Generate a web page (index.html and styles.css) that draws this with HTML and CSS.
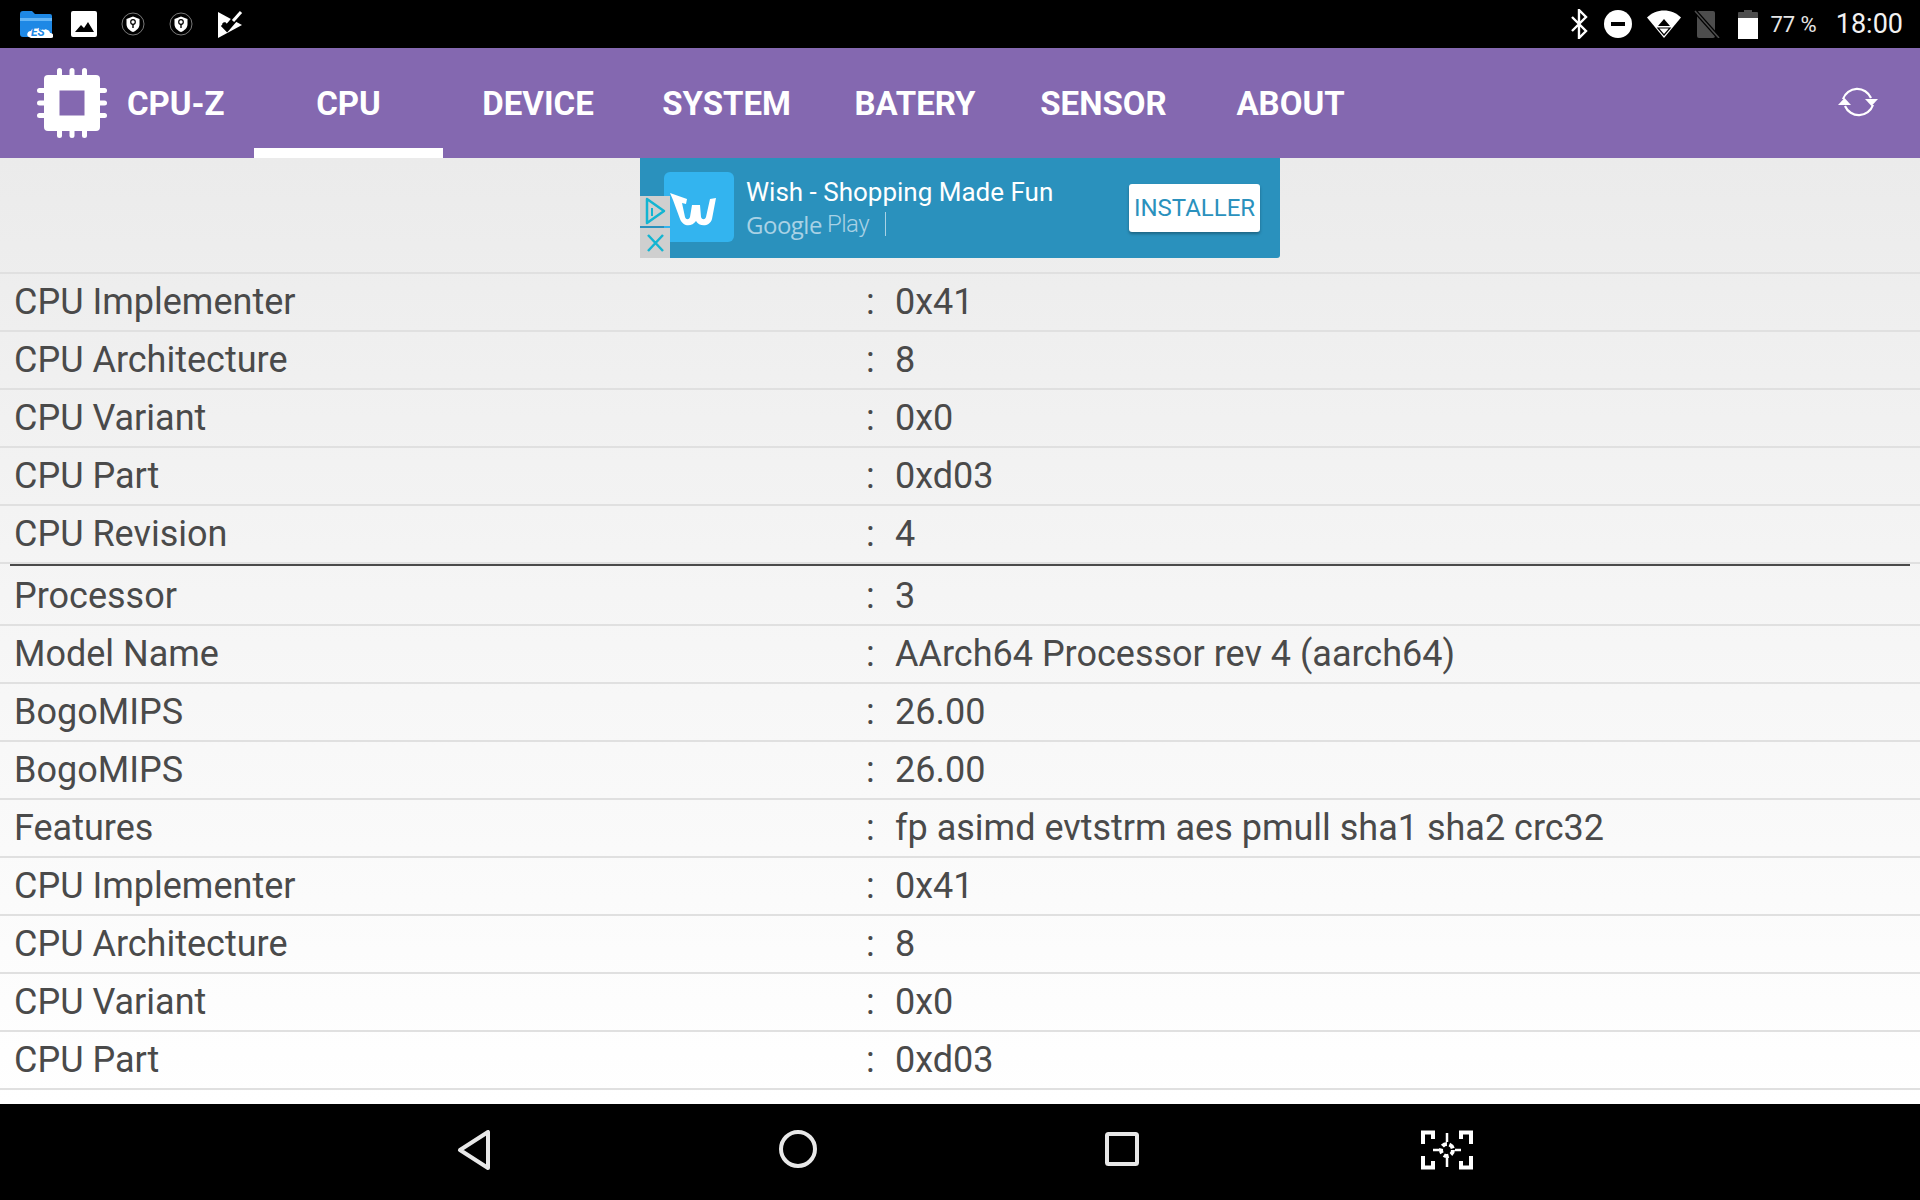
FILE: index.html
```html
<!DOCTYPE html>
<html lang="en">
<head>
<meta charset="utf-8">
<title>CPU-Z</title>
<link rel="stylesheet" href="styles.css">
</head>
<body>
<div class="screen">
  <header class="status">
    <div class="status-left">
      <svg class="ic-es" viewBox="0 0 34 30"><path d="M1 5a3 3 0 0 1 3-3h9l3 3h15a2 2 0 0 1 2 2v18a3 3 0 0 1-3 3H4a3 3 0 0 1-3-3z" fill="#1e88e5"/><path d="M1 9h32v3H1z" fill="#64b5f6"/><path d="M6 28c-3-1-2-6 2-6 1-4 8-5 10-1 4-2 9 0 9 3 4 0 5 5 1 5H8z" fill="#fff" transform="translate(4 0)"/><text x="12" y="27" class="es-text">ES</text></svg>
      <svg class="ic-pic" viewBox="0 0 26 26"><rect width="26" height="26" rx="2" fill="#fff"/><path d="M4 21l6-7 3 3 4-6 6 10z" fill="#000"/></svg>
      <svg class="ic-vpn" viewBox="0 0 24 24"><circle cx="12" cy="12" r="11" fill="none" stroke="#aaa" stroke-width=".7"/><path d="M12 4.5l6.5 2.5v5c0 4-3 6.500-6.500 8-3.500-1.500-6.500-4-6.500-8V7z" fill="#fff"/><circle cx="12" cy="10" r="2.300" fill="none" stroke="#000" stroke-width="1.200"/><path d="M12 12v4" stroke="#000" stroke-width="1.400"/></svg>
      <svg class="ic-vpn" viewBox="0 0 24 24"><circle cx="12" cy="12" r="11" fill="none" stroke="#aaa" stroke-width=".7"/><path d="M12 4.5l6.5 2.5v5c0 4-3 6.500-6.500 8-3.500-1.500-6.500-4-6.500-8V7z" fill="#fff"/><circle cx="12" cy="10" r="2.300" fill="none" stroke="#000" stroke-width="1.200"/><path d="M12 12v4" stroke="#000" stroke-width="1.400"/></svg>
      <svg class="ic-task" viewBox="0 0 26 27"><path d="M1 1l24 13L1 27z" fill="#fff"/><path d="M6 13l4 4 13-15" fill="none" stroke="#000" stroke-width="6"/><path d="M6 13l4 4 11-14" fill="none" stroke="#fff" stroke-width="0"/><path d="M6 12l4 4 8-9" fill="none" stroke="#000" stroke-width="3"/><path d="M16 10l8-9" stroke="#fff" stroke-width="3"/></svg>
    </div>
    <div class="status-right">
      <svg class="ic-bt" viewBox="0 0 18 30"><path d="M2 8l14 14-7 7V1l7 7L2 22" fill="none" stroke="#fff" stroke-width="2.400"/></svg>
      <svg class="ic-dnd" viewBox="0 0 28 28"><circle cx="14" cy="14" r="14" fill="#fff"/><rect x="7" y="12" width="14" height="4" fill="#000"/></svg>
      <svg class="ic-wifi" viewBox="0 0 34 28"><path d="M0 7.500C9-2 25-2 34 7.500L17 28z" fill="#fff"/><path d="M17 9l6 7H11z" fill="#000"/><path d="M17 25l6-7H11z" fill="none" stroke="#000" stroke-width="1.200"/></svg>
      <svg class="ic-sim" viewBox="0 0 26 28"><path d="M5 1h14a2 2 0 0 1 2 2v23a2 2 0 0 1-2 2H5a2 2 0 0 1-2-2V3a2 2 0 0 1 2-2z" fill="#4d4d4d"/><path d="M1 1l24 27" stroke="#000" stroke-width="4"/><path d="M1 1l24 27" stroke="#4d4d4d" stroke-width="1.500"/></svg>
      <svg class="ic-bat" viewBox="0 0 20 30"><path d="M6 3V1h8v2h5a1 1 0 0 1 1 1v6H0V4a1 1 0 0 1 1-1z" fill="#4d4d4d"/><rect y="9" width="20" height="21" fill="#fff"/></svg>
      <span class="pct">77 %</span>
      <span class="clock">18:00</span>
    </div>
  </header>

  <nav class="appbar">
    <div class="brand">
      <svg class="chip" viewBox="0 0 70 70"><g fill="#fff"><rect x="7" y="7" width="56" height="56" rx="4"/><rect x="20" y="0" width="5" height="70" rx="2.500"/><rect x="32.500" y="0" width="5" height="70" rx="2.500"/><rect x="45" y="0" width="5" height="70" rx="2.500"/><rect y="20" width="70" height="5" rx="2.500"/><rect y="32.500" width="70" height="5" rx="2.500"/><rect y="45" width="70" height="5" rx="2.500"/></g><rect x="22.500" y="22.500" width="25" height="25" fill="#8468b0"/></svg>
      <span class="brand-name">CPU-Z</span>
    </div>
    <div class="tabs">
      <a class="tab tab-cpu active">CPU</a>
      <a class="tab tab-device">DEVICE</a>
      <a class="tab tab-system">SYSTEM</a>
      <a class="tab tab-batery">BATERY</a>
      <a class="tab tab-sensor">SENSOR</a>
      <a class="tab tab-about">ABOUT</a>
    </div>
    <svg class="refresh" viewBox="0 0 42 36"><g fill="none" stroke="#fff" stroke-width="2.200"><path d="M6 15A15 15 0 0 1 34 14"/><path d="M36 21A15 15 0 0 1 8 22"/></g><path d="M28 15h13l-6.500 7z" fill="#fff"/><path d="M1 21h13l-6.500-7z" fill="#fff"/></svg>
  </nav>

  <main class="content">
    <div class="ad-wrap">
      <div class="ad">
        <div class="ad-logo"><svg viewBox="0 0 54 42"><path d="M5 7l17 6-1 5-4-1 3 14c1 3 4 3 5 0l2-12 8 0 1 12c1 3 4 3 5 0l4-18 6-1-4 21c-2 8-13 8-16 2-4 6-13 6-16-2L8 14z" fill="#fff"/></svg></div>
        <div class="ad-text">
          <div class="ad-title">Wish - Shopping Made Fun</div>
          <div class="ad-sub"><span class="ad-google">Google</span> <span class="ad-play">Play</span><span class="ad-bar"></span></div>
        </div>
        <div class="ad-btn">INSTALLER</div>
        <div class="ad-choices">
          <div class="ad-choice"><svg viewBox="0 0 24 30"><path d="M4 3l17 12L4 27z" fill="none" stroke="#13b5d2" stroke-width="2.500" stroke-linejoin="round"/><path d="M9 12v8" stroke="#13b5d2" stroke-width="2"/></svg></div>
          <div class="ad-choice"><svg viewBox="0 0 24 30"><path d="M5 7l15 16M20 7L5 23" stroke="#13b5d2" stroke-width="2.500"/></svg></div>
        </div>
      </div>
    </div>
    <section class="table">
      <div class="row"><span class="k">CPU Implementer</span><span class="c">:</span><span class="v">0x41</span></div>
      <div class="row"><span class="k">CPU Architecture</span><span class="c">:</span><span class="v">8</span></div>
      <div class="row"><span class="k">CPU Variant</span><span class="c">:</span><span class="v">0x0</span></div>
      <div class="row"><span class="k">CPU Part</span><span class="c">:</span><span class="v">0xd03</span></div>
      <div class="row"><span class="k">CPU Revision</span><span class="c">:</span><span class="v">4</span></div>
    </section>
    <hr class="divider">
    <section class="table table-second">
      <div class="row"><span class="k">Processor</span><span class="c">:</span><span class="v">3</span></div>
      <div class="row"><span class="k">Model Name</span><span class="c">:</span><span class="v">AArch64 Processor rev 4 (aarch64)</span></div>
      <div class="row"><span class="k">BogoMIPS</span><span class="c">:</span><span class="v">26.00</span></div>
      <div class="row"><span class="k">BogoMIPS</span><span class="c">:</span><span class="v">26.00</span></div>
      <div class="row"><span class="k">Features</span><span class="c">:</span><span class="v">fp asimd evtstrm aes pmull sha1 sha2 crc32</span></div>
      <div class="row"><span class="k">CPU Implementer</span><span class="c">:</span><span class="v">0x41</span></div>
      <div class="row"><span class="k">CPU Architecture</span><span class="c">:</span><span class="v">8</span></div>
      <div class="row"><span class="k">CPU Variant</span><span class="c">:</span><span class="v">0x0</span></div>
      <div class="row"><span class="k">CPU Part</span><span class="c">:</span><span class="v">0xd03</span></div>
    </section>
  </main>

  <footer class="navbar">
    <svg class="nav-back" viewBox="0 0 34 40"><path d="M31 2v36L3 20z" fill="none" stroke="#e8e8e8" stroke-width="4" stroke-linejoin="round"/></svg>
    <svg class="nav-home" viewBox="0 0 38 38"><circle cx="19" cy="19" r="17" fill="none" stroke="#e8e8e8" stroke-width="4"/></svg>
    <svg class="nav-recent" viewBox="0 0 34 34"><rect x="2" y="2" width="30" height="30" rx="1.500" fill="none" stroke="#e8e8e8" stroke-width="4"/></svg>
    <svg class="nav-shot" viewBox="0 0 56 40"><g fill="none" stroke="#fff" stroke-width="4"><path d="M14 9V2.500H4V14"/><path d="M42 9V2.500h10V14"/><path d="M14 31v6.500H4V26"/><path d="M42 31v6.500h10V26"/></g><circle cx="28" cy="20" r="6" fill="none" stroke="#fff" stroke-width="4" stroke-dasharray="5 2.500"/><path d="M28 3v9M28 28v9M14 20h6M36 20h6" stroke="#fff" stroke-width="2.500"/></svg>
  </footer>
</div>
</body>
</html>
```

FILE: styles.css
```css
* { box-sizing: border-box; }
html, body { margin: 0; padding: 0; }
body { width: 1920px; height: 1200px; overflow: hidden; font-family: Roboto, "Liberation Sans", sans-serif; }
.screen { width: 1920px; height: 1200px; display: flex; flex-direction: column; background: #fff; }

.status { height: 48px; flex: none; background: #000; display: flex; justify-content: space-between; align-items: center; padding: 0 17px 0 19px; }
.status-left, .status-right { display: flex; align-items: center; }
.status svg { display: block; flex: none; }
.ic-es { width: 34px; height: 30px; }
.es-text { font: italic 700 12px Roboto, sans-serif; fill: #1e88e5; }
.ic-pic { width: 26px; height: 26px; margin-left: 18px; }
.ic-vpn { width: 24px; height: 24px; margin-left: 24px; }
.ic-vpn + .ic-vpn { margin-left: 24px; }
.ic-task { width: 26px; height: 27px; margin-left: 24px; }
.ic-bt { width: 18px; height: 30px; }
.ic-dnd { width: 28px; height: 28px; margin-left: 16px; }
.ic-wifi { width: 34px; height: 28px; margin-left: 15px; }
.ic-sim { width: 26px; height: 28px; margin-left: 13px; }
.ic-bat { width: 20px; height: 30px; margin-left: 18px; }
.pct { color: #e6e6e6; font-size: 22px; margin-left: 12px; }
.clock { color: #f2f2f2; font-size: 27px; margin-left: 19px; }

.appbar { height: 110px; flex: none; background: #8468b0; display: flex; align-items: stretch; position: relative; }
.brand { display: flex; align-items: center; width: 254px; padding-left: 37px; }
.chip { width: 70px; height: 70px; flex: none; }
.brand-name { color: #fff; font-weight: 700; font-size: 33px; margin-left: 20px; }
.tabs { display: flex; }
.tab { color: #fff; font-weight: 700; font-size: 33px; display: flex; align-items: center; justify-content: center; height: 110px; }
.tab.active { border-bottom: 10px solid #fff; padding-top: 10px; }
.tab-cpu { width: 189px; }
.tab-device { width: 190px; }
.tab-system { width: 187px; }
.tab-batery { width: 190px; }
.tab-sensor { width: 187px; }
.tab-about { width: 187px; }
.refresh { position: absolute; right: 41px; top: 36px; width: 42px; height: 36px; }

.content { flex: 1; min-height: 0; overflow: hidden; background: linear-gradient(#ebebeb, #f5f5f5 46%, #ffffff); }
.ad-wrap { height: 116px; border-bottom: 2px solid #e0e0e0; display: flex; justify-content: center; padding-right: 0; }
.ad { width: 640px; height: 100px; background: #2a91bd; border-radius: 0 0 3px 3px; display: flex; align-items: flex-start; position: relative; }
.ad-logo { width: 70px; height: 70px; background: #33b4ef; border-radius: 6px; margin: 14px 0 0 24px; display: flex; align-items: center; justify-content: center; }
.ad-logo svg { width: 54px; height: 42px; margin-left: -14px; }
.ad-text { margin: 19px 0 0 12px; flex: 1; }
.ad-title { color: #fff; font-size: 26px; line-height: 30px; }
.ad-sub { display: flex; align-items: center; height: 30px; margin-top: 2px; color: #a9d2e5; font-size: 24px; letter-spacing: -.5px; }
.ad-google { font-family: "Open Sans", sans-serif; }
.ad-play { font-weight: 300; margin-left: 5px; }
.ad-bar { width: 1px; height: 24px; background: #a9d2e5; margin-left: 16px; }
.ad-btn { width: 131px; height: 48px; margin: 26px 20px 0 0; background: #fff; border-radius: 3px; color: #2a91bd; font-size: 24px; display: flex; align-items: center; justify-content: center; box-shadow: 0 2px 3px rgba(0,0,0,.3); }
.ad-choices { position: absolute; left: 0; bottom: 0; }
.ad-choice { width: 30px; height: 30px; background: #cfcfcf; margin-top: 2px; }
.ad-choice svg { display: block; width: 100%; height: 100%; }

.row { height: 58px; display: flex; align-items: center; border-bottom: 2px solid #e0e0e0; padding-left: 14px; color: #4a4a4a; font-size: 36px; }
.k { width: 852px; flex: none; }
.c { width: 29px; flex: none; }
.table > .row:last-child { }
.divider { height: 2px; margin: 0 10px; border: 0; background: #4a4a4a; }
.table-second { margin-top: 2px; }

.navbar { height: 96px; flex: none; background: #000; position: relative; }
.nav-back { position: absolute; left: 457px; top: 26px; width: 34px; height: 40px; }
.nav-home { position: absolute; left: 779px; top: 26px; width: 38px; height: 38px; }
.nav-recent { position: absolute; left: 1105px; top: 28px; width: 34px; height: 34px; }
.nav-shot { position: absolute; left: 1419px; top: 26px; width: 56px; height: 40px; }
```
